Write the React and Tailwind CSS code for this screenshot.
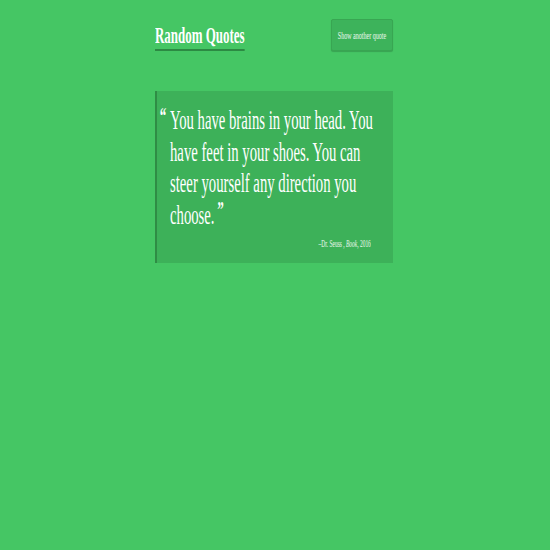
const serif = { fontFamily: '"Liberation Serif", "DejaVu Serif", serif' };

export default function App() {
  return (
    <div className="min-h-[550px] w-full overflow-hidden bg-[#45c664] text-white" style={serif}>
      <div className="ml-[155px] w-[238px] pt-[19px]">
        {/* Header */}
        <div className="flex items-start justify-between">
          <h1 className="mt-[5px] inline-block origin-left scale-x-[0.54] whitespace-nowrap border-b-2 border-[#2c8a43] pb-[3px] text-[24px] font-bold leading-[22px]">
            Random Quotes
          </h1>
          <button className="flex h-[32px] w-[62px] items-center justify-center rounded-[2px] border border-[#38a652] bg-[#3db35b] shadow-[0_1px_1px_rgba(0,0,0,0.18)]">
            <span className="inline-block shrink-0 scale-x-[0.55] whitespace-nowrap text-[11px] leading-none text-white/90">
              Show another quote
            </span>
          </button>
        </div>

        {/* Quote */}
        <div className="mt-[40px] overflow-hidden border-l-2 border-[#2f8d45] bg-[#3db159] pb-[14px] pl-[13px] pt-[14px]">
          <p className="relative w-[389px] origin-top-left scale-x-[0.545] text-[27px] leading-[31.7px]">
            <span className="absolute left-[-19px] top-[-5px] text-[24px] font-bold">“</span>
            You have brains in your head. You have feet in your shoes. You can steer yourself any direction you choose.
            <span className="relative top-[-7px] ml-[5px] text-[24px] font-bold leading-none">”</span>
          </p>
          <div className="mt-[7px] flex justify-end pr-[22px]">
            <p className="origin-right scale-x-[0.545] whitespace-nowrap text-[10px] leading-none text-white/90">
              –Dr. Seuss , <i>Book</i>, 2016
            </p>
          </div>
        </div>
      </div>
    </div>
  );
}
